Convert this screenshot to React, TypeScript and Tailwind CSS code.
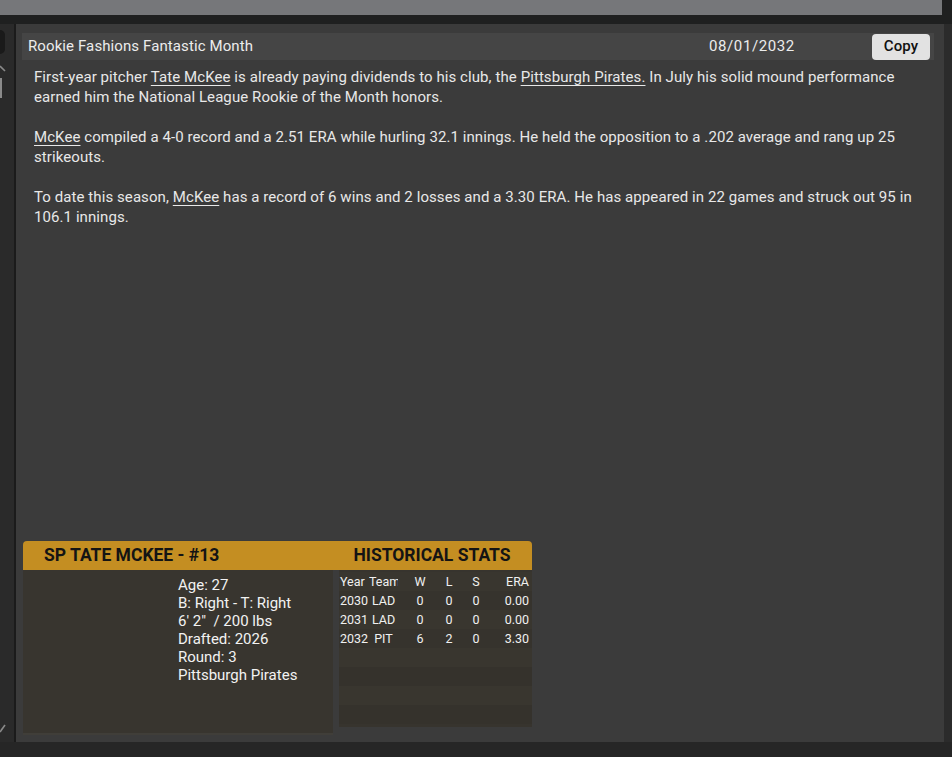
import React from "react";

const F = { fontFamily: "Roboto, 'Noto Sans', sans-serif" } as const;

function Link({ children }: { children: React.ReactNode }) {
  return <span className="underline decoration-1 underline-offset-[3px]">{children}</span>;
}

const rows = [
  ["2030", "LAD", "0", "0", "0", "0.00"],
  ["2031", "LAD", "0", "0", "0", "0.00"],
  ["2032", "PIT", "6", "2", "0", "3.30"],
];

export default function App() {
  return (
    <div style={F} className="w-[952px] h-[757px] bg-[#1f2020] overflow-hidden flex flex-col">
      <div className="h-[15px] w-[942px] bg-[#76777a] shrink-0" />
      <div className="h-[9px] shrink-0" />
      <div className="flex h-[718px] shrink-0">
        <div className="w-[14px] bg-[#2a2a2a] shrink-0">
          <svg width="14" height="718" viewBox="0 0 14 718">
            <rect x="-6" y="6" width="11" height="24" rx="5" fill="#1a1a1a" />
            <path d="M0 42 L5 47" stroke="#8a8a8a" strokeWidth="1.6" fill="none" />
            <rect x="0" y="54" width="2" height="20" fill="#8a8a8a" />
            <path d="M0 708 L5 701" stroke="#8a8a8a" strokeWidth="1.6" fill="none" />
          </svg>
        </div>
        <div className="w-[2px] bg-[#1b1b1b] shrink-0" />
        <div className="w-[928px] bg-[#3b3b3b] flex flex-col pl-[6px] pt-[9px] shrink-0">
          <div className="w-[912px] h-[27px] bg-[#454545] flex items-center pl-[6px] pr-[4px] text-[15px] tracking-[0.1px] text-[#ececec]">
            <span className="w-[681px]">Rookie Fashions Fantastic Month</span>
            <span className="w-[163px] tracking-[0.6px]">08/01/2032</span>
            <button className="w-[58px] h-[26px] rounded-[4px] bg-[#e2e2e2] text-[#111] text-[15px] font-medium flex items-center justify-center">
              Copy
            </button>
          </div>
          <div className="pl-[12px] pt-[7px] text-[15px] tracking-[0.08px] leading-[20px] text-[#e8e8e8] whitespace-nowrap">
            <p>
              First-year pitcher <Link>Tate McKee</Link> is already paying dividends to his club, the{" "}
              <Link>Pittsburgh Pirates.</Link> In July his solid mound performance
              <br />
              earned him the National League Rookie of the Month honors.
            </p>
            <p className="mt-[20px]">
              <Link>McKee</Link> compiled a 4-0 record and a 2.51 ERA while hurling 32.1 innings. He held the opposition to a .202 average and rang up 25
              <br />
              strikeouts.
            </p>
            <p className="mt-[20px]">
              To date this season, <Link>McKee</Link> has a record of 6 wins and 2 losses and a 3.30 ERA. He has appeared in 22 games and struck out 95 in
              <br />
              106.1 innings.
            </p>
          </div>
          <div className="flex-1" />
          <div className="ml-[1px] w-[509px] mb-[7px] flex flex-col">
            <div className="h-[29px] bg-[#c48e22] rounded-t-[4px] flex items-center text-[17.5px] font-bold text-[#141414]">
              <span className="w-[317px] pl-[21px]">SP TATE MCKEE - #13</span>
              <span className="w-[192px] text-center pr-[8px]">HISTORICAL STATS</span>
            </div>
            <div className="flex h-[165px]">
              <div className="w-[310px] bg-[#38352f] border-b-[2px] border-[#403e39] pl-[155px] pt-[6px] text-[15px] leading-[18px] text-[#f2f2f2]">
                <div>Age: 27</div>
                <div>B: Right - T: Right</div>
                <div>6' 2"&nbsp; / 200 lbs</div>
                <div>Drafted: 2026</div>
                <div>Round: 3</div>
                <div>Pittsburgh Pirates</div>
              </div>
              <div className="w-[6px]" />
              <div className="w-[193px] h-[157px] bg-[#37342e] flex flex-col pt-[2px] text-[12.5px] leading-[19px] text-[#f0f0f0]">
                <div className="flex pl-[1px] bg-[#39362f]">
                  <span className="w-[29px]">Year</span>
                  <span className="w-[29px] overflow-hidden whitespace-nowrap">Team</span>
                  <span className="w-[44px] text-center">W</span>
                  <span className="w-[14px] text-center">L</span>
                  <span className="w-[40px] text-center">S</span>
                  <span className="w-[33px] text-right">ERA</span>
                </div>
                {rows.map((r, i) => (
                  <div key={i} className={`flex pl-[1px] ${i % 2 === 0 ? "bg-[#36332d]" : "bg-[#39362f]"}`}>
                    <span className="w-[29px]">{r[0]}</span>
                    <span className="w-[29px] text-center">{r[1]}</span>
                    <span className="w-[44px] text-center">{r[2]}</span>
                    <span className="w-[14px] text-center">{r[3]}</span>
                    <span className="w-[40px] text-center">{r[4]}</span>
                    <span className="w-[33px] text-right">{r[5]}</span>
                  </div>
                ))}
                <div className="h-[19px] bg-[#39362f]" />
                <div className="h-[19px] bg-[#35322c]" />
                <div className="h-[19px] bg-[#39362f]" />
                <div className="h-[19px] bg-[#35322c]" />
              </div>
            </div>
          </div>
        </div>
        <div className="w-[8px] bg-[#2b2b2b]" />
      </div>
      <div className="flex-1 bg-[#262626]" />
    </div>
  );
}
